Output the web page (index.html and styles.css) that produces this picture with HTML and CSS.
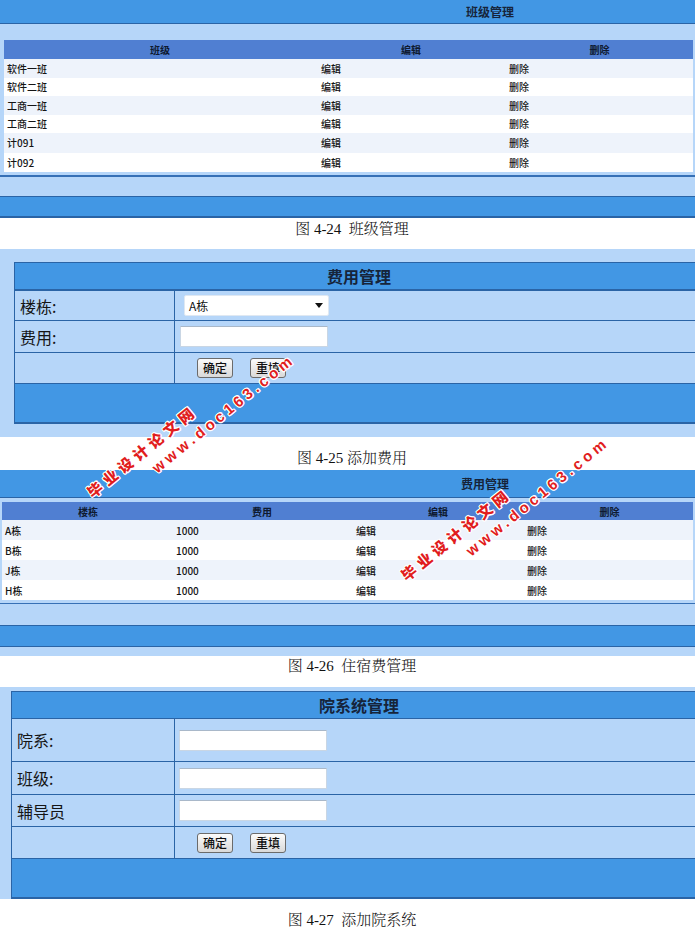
FILE: index.html
```html
<!DOCTYPE html>
<html lang="zh-CN">
<head>
<meta charset="utf-8">
<title>管理界面</title>
<link rel="stylesheet" href="styles.css">
</head>
<body>
<div class="page">

  <section class="list list-a">
    <div class="titlebar t-a">班级管理</div>
    <div class="gap gap-a"></div>
    <div class="tbl tbl-a">
      <div class="row head"><div>班级</div><div>编辑</div><div>删除</div></div>
      <div class="row odd"><div>软件一班</div><div>编辑</div><div>删除</div></div>
      <div class="row"><div>软件二班</div><div>编辑</div><div>删除</div></div>
      <div class="row odd"><div>工商一班</div><div>编辑</div><div>删除</div></div>
      <div class="row"><div>工商二班</div><div>编辑</div><div>删除</div></div>
      <div class="row odd tall"><div>计091</div><div>编辑</div><div>删除</div></div>
      <div class="row tall"><div>计092</div><div>编辑</div><div>删除</div></div>
    </div>
    <div class="foot foot-a">
      <div class="band"></div>
      <div class="bluebar"></div>
    </div>
  </section>
  <p class="caption cap-1">图 4-24&nbsp;&nbsp;班级管理</p>

  <section class="panel panel-b">
    <div class="form form-b">
      <div class="fhead">费用管理</div>
      <div class="frow r-b1"><div class="lab">楼栋:</div><div class="val v-sel"><div class="select"><span>A栋</span><span class="arrow"></span></div></div></div>
      <div class="frow r-b2"><div class="lab">费用:</div><div class="val v-inp"><div class="input"></div></div></div>
      <div class="frow r-b3"><div class="lab"></div><div class="val v-btn"><button class="btn">确定</button><button class="btn">重填</button></div></div>
      <div class="ffoot"></div>
    </div>
  </section>
  <p class="caption cap-2">图 4-25 添加费用</p>

  <section class="list list-c">
    <div class="titlebar t-c">费用管理</div>
    <div class="gap gap-c"></div>
    <div class="tbl tbl-c">
      <div class="row head"><div>楼栋</div><div>费用</div><div>编辑</div><div>删除</div></div>
      <div class="row odd"><div>A栋</div><div>1000</div><div>编辑</div><div>删除</div></div>
      <div class="row"><div>B栋</div><div>1000</div><div>编辑</div><div>删除</div></div>
      <div class="row odd"><div>J栋</div><div>1000</div><div>编辑</div><div>删除</div></div>
      <div class="row"><div>H栋</div><div>1000</div><div>编辑</div><div>删除</div></div>
    </div>
    <div class="foot foot-c">
      <div class="band"></div>
      <div class="bluebar"></div>
      <div class="tail"></div>
    </div>
  </section>
  <p class="caption cap-3">图 4-26&nbsp;&nbsp;住宿费管理</p>

  <section class="panel panel-d">
    <div class="form form-d">
      <div class="fhead">院系统管理</div>
      <div class="frow r-d1"><div class="lab">院系:</div><div class="val v-inp"><div class="input"></div></div></div>
      <div class="frow r-d2"><div class="lab">班级:</div><div class="val v-inp"><div class="input"></div></div></div>
      <div class="frow r-d3"><div class="lab">辅导员</div><div class="val v-inp"><div class="input"></div></div></div>
      <div class="frow r-d4"><div class="lab"></div><div class="val v-btn"><button class="btn">确定</button><button class="btn">重填</button></div></div>
      <div class="ffoot"></div>
    </div>
  </section>
  <p class="caption cap-4">图 4-27&nbsp;&nbsp;添加院系统</p>

  <div class="wm wm-1">
    <div class="wm-cn">毕业设计论文网</div>
    <div class="wm-en">www.doc163.com</div>
  </div>
  <div class="wm wm-2">
    <div class="wm-cn">毕业设计论文网</div>
    <div class="wm-en">www.doc163.com</div>
  </div>

</div>
</body>
</html>
```

FILE: styles.css
```css
html, body {
  margin: 0;
  padding: 0;
  background: #ffffff;
}

body {
  width: 695px;
  overflow: hidden;
  font-family: "Noto Sans CJK SC", "Liberation Sans", sans-serif;
  color: #222222;
}

.page {
  position: relative;
  width: 695px;
  height: 933px;
  overflow: hidden;
}

/* ---------- list sections ---------- */
.list {
  background: #b6d6f9;
}

.titlebar {
  background: #4297e4;
  border-bottom: 1px solid #2a64a6;
  display: flex;
  align-items: center;
  font-size: 12px;
  font-weight: bold;
  color: #16243a;
  white-space: nowrap;
}

.t-a { height: 23px; padding-left: 466px; }
.t-c { height: 27px; padding-left: 461px; }

.gap-a { height: 16px; }
.gap-c { height: 4px; }

.tbl {
  background: #ffffff;
}

.tbl-a { margin: 0 2px 0 4px; }
.tbl-c { margin: 0 2px 0 2px; }

.row {
  display: grid;
  align-items: center;
  font-size: 10px;
  font-weight: 500;
  color: #141414;
  background: #ffffff;
  white-space: nowrap;
}

.row.odd { background: #eef3fb; }

.tbl-a .row { grid-template-columns: 312px 190px 1fr; height: 18.5px; }
.tbl-a .row.tall { height: 19.5px; }
.tbl-a .row.head { height: 19px; }
.tbl-c .row { grid-template-columns: 172px 176px 176px 1fr; height: 20px; }
.tbl-c .row.head { height: 18px; }

.row > div { padding-left: 3px; }
.tbl-a .row > div:nth-child(2) { padding-left: 5px; }
.tbl-a .row > div:nth-child(3) { padding-left: 3px; }
.tbl-c .row > div:nth-child(2) { padding-left: 2px; }
.tbl-c .row > div:nth-child(3) { padding-left: 6px; }
.tbl-c .row > div:nth-child(4) { padding-left: 1px; }

.row.head {
  background: #507fd2;
  font-weight: bold;
  color: #0e1a30;
}

.row.head > div,
.tbl-a .row.head > div,
.tbl-c .row.head > div {
  padding-left: 0;
  text-align: center;
}

.foot { padding-top: 3px; }

.band {
  border-top: 2px solid #3670b6;
  background: #b6d6f9;
}

.bluebar {
  border-top: 1px solid #2a64a6;
  background: #4297e4;
}

.foot-a .band { height: 19px; }
.foot-a .bluebar { height: 19px; border-bottom: 2px solid #2a64a6; }

.foot-c .band { height: 21px; border-top-width: 1px; }
.foot-c .bluebar { height: 20px; border-bottom: 1px solid #2a64a6; }
.foot-c .tail { height: 9px; }

/* ---------- captions ---------- */
.caption {
  margin: 0;
  padding-left: 9px;
  text-align: center;
  font-family: "Liberation Serif", "Noto Serif CJK SC", "Noto Sans CJK SC", serif;
  font-size: 15px;
  font-weight: 300;
  line-height: 20px;
  color: #111111;
  white-space: nowrap;
}

.cap-1 { height: 30px; padding-top: 1px; }
.cap-2 { height: 22px; padding-top: 11px; }
.cap-3 { height: 31px; padding-top: 0; }
.cap-4 { height: 24px; padding-top: 11px; }

/* ---------- form panels ---------- */
.panel {
  background: #b6d6f9;
}

.panel-b { padding: 13px 0 13px 14px; }
.panel-d { padding: 4px 0 0 11px; }

.form {
  border: 1px solid #2a64a6;
  border-right: none;
  background: #b6d6f9;
}

.form-b { width: 688px; }
.form-d { width: 694px; }

.fhead {
  height: 26px;
  background: #4297e4;
  display: flex;
  align-items: center;
  justify-content: center;
  font-size: 16px;
  font-weight: bold;
  color: #16243a;
}

.form-b .fhead { border-bottom: 2px solid #2a64a6; }
.form-d .fhead { border-bottom: 1px solid #2a64a6; }

.frow {
  display: grid;
  border-bottom: 1px solid #2a64a6;
}

.form-b .frow { grid-template-columns: 160px 1fr; }
.form-d .frow { grid-template-columns: 163px 1fr; }

.r-b1 { height: 29px; }
.r-b2 { height: 31px; }
.r-b3 { height: 30px; }
.r-d1 { height: 42px; }
.r-d2 { height: 32px; }
.r-d3 { height: 31px; }
.r-d4 { height: 31px; }

.lab {
  border-right: 1px solid #2a64a6;
  display: flex;
  align-items: center;
  padding-left: 5px;
  font-size: 16px;
  color: #151515;
  white-space: nowrap;
}

.val {
  display: flex;
  align-items: center;
}

.v-sel { padding-left: 9px; }
.v-inp { padding-left: 5px; }
.v-btn { padding-left: 22px; gap: 17px; }
.form-d .v-inp { padding-left: 4px; }

.select {
  width: 145px;
  height: 21px;
  box-sizing: border-box;
  background: #ffffff;
  border: 1px solid #dfe8f2;
  border-radius: 2px;
  display: flex;
  align-items: center;
  justify-content: space-between;
  padding: 0 5px 0 4px;
  font-size: 12px;
  color: #111111;
}

.arrow {
  width: 0;
  height: 0;
  border-left: 4px solid transparent;
  border-right: 4px solid transparent;
  border-top: 5px solid #111111;
}

.input {
  width: 148px;
  height: 21px;
  box-sizing: border-box;
  background: #ffffff;
  border: 1px solid #c9d6e4;
  border-top-color: #a9b8c9;
  border-radius: 1px;
}

.btn {
  margin: 0;
  width: 36px;
  height: 20px;
  padding: 0;
  box-sizing: border-box;
  border: 1px solid #6b6b6b;
  border-radius: 3px;
  background: linear-gradient(#fbfbfb, #d9d9d9);
  font-family: "Noto Sans CJK SC", sans-serif;
  font-size: 12px;
  font-weight: 500;
  line-height: 18px;
  color: #111111;
}

.form-b .ffoot { height: 38px; background: #4297e4; border-bottom: 1px solid #2a64a6; }
.form-d .ffoot { height: 38px; background: #4297e4; border-bottom: 1px solid #2a64a6; }

/* ---------- watermark overlay ---------- */
.wm {
  position: absolute;
  transform-origin: 0 0;
  transform: rotate(-39deg);
  color: #e11d1d;
  font-weight: bold;
  white-space: nowrap;
  text-shadow:
    1px 0 #fff, -1px 0 #fff, 0 1px #fff, 0 -1px #fff,
    1px 1px #fff, -1px -1px #fff, 1px -1px #fff, -1px 1px #fff;
  pointer-events: none;
}

.wm-1 { left: 84px; top: 488px; }
.wm-2 { left: 398px; top: 571px; }

.wm-cn {
  font-family: "Noto Sans CJK SC", sans-serif;
  font-size: 15px;
  font-weight: 900;
  line-height: 16px;
  letter-spacing: 4.5px;
}

.wm-en {
  font-family: "Liberation Sans", sans-serif;
  font-size: 15px;
  line-height: 14px;
  letter-spacing: 3.8px;
  margin: 7px 0 0 66px;
}
```
